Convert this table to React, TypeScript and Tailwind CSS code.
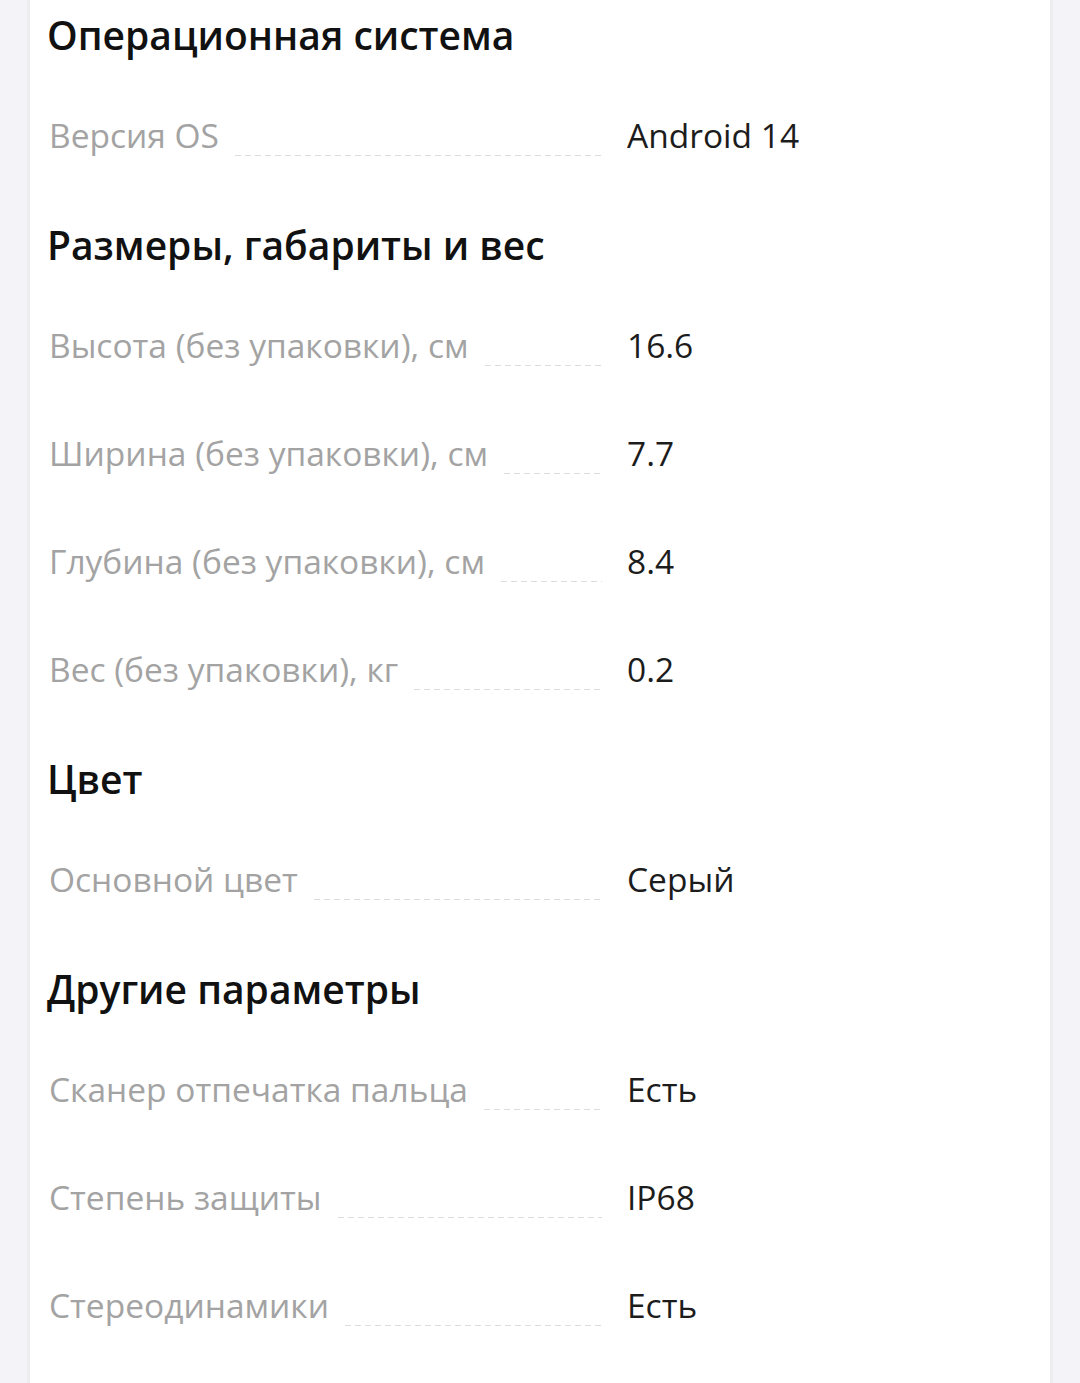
const sections: { title: string; rows: [string, string][] }[] = [
  { title: "Операционная система", rows: [["Версия OS", "Android 14"]] },
  {
    title: "Размеры, габариты и вес",
    rows: [
      ["Высота (без упаковки), см", "16.6"],
      ["Ширина (без упаковки), см", "7.7"],
      ["Глубина (без упаковки), см", "8.4"],
      ["Вес (без упаковки), кг", "0.2"],
    ],
  },
  { title: "Цвет", rows: [["Основной цвет", "Серый"]] },
  {
    title: "Другие параметры",
    rows: [
      ["Сканер отпечатка пальца", "Есть"],
      ["Степень защиты", "IP68"],
      ["Стереодинамики", "Есть"],
    ],
  },
];

function SpecRow({ label, value }: { label: string; value: string }) {
  return (
    <div className="flex h-[108px] items-center">
      <div className="flex w-[555px] shrink-0 items-center pl-[2px]">
        <span className="text-[33.5px] leading-[40px] text-[#a3a3a3]">{label}</span>
        <span className="mt-[40px] ml-[16px] h-px flex-1 bg-[linear-gradient(to_right,#dcdcdc_6px,transparent_6px)] bg-[length:10px_1px]" />
      </div>
      <span className="ml-[25px] text-[33.5px] leading-[40px] text-[#1c1c1c]">{value}</span>
    </div>
  );
}

export default function App() {
  return (
    <div className="min-h-[1383px] bg-[#f4f4f8] px-[27px] font-['Open_Sans',sans-serif]">
      <div className="min-h-[1383px] border-x-[3px] border-[#ececf1] bg-white px-[17px]">
        {sections.map((section, index) => (
          <section key={section.title}>
            <h3
              className={
                index === 0
                  ? "pt-[11px] pb-[22px] text-[39px] leading-[48px] font-semibold text-[#111]"
                  : "pt-[32px] pb-[22px] text-[39px] leading-[48px] font-semibold text-[#111]"
              }
            >
              {section.title}
            </h3>
            {section.rows.map(([label, value]) => (
              <SpecRow key={label} label={label} value={value} />
            ))}
          </section>
        ))}
      </div>
    </div>
  );
}
